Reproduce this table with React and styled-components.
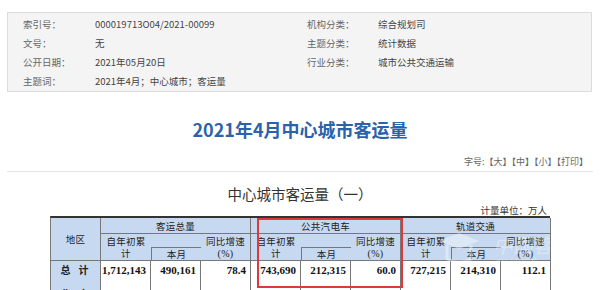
import React from "react";
import styled, { createGlobalStyle } from "styled-components";

const GlobalStyle = createGlobalStyle`
  html, body {
    margin: 0;
    padding: 0;
    background: #fff;
  }
  body {
    width: 600px;
    height: 290px;
    overflow: hidden;
    font-family: "Noto Sans CJK SC", "Noto Sans", sans-serif;
  }
`;

const InfoBox = styled.div`
  box-sizing: border-box;
  margin: 12px 8px 0 7px;
  height: 80px;
  padding: 1px 0 1px 15px;
  background: #f4f4f4;
  border: 1px solid #dcdcdc;
  display: grid;
  grid-template-columns: 72px 212px 71px 1fr;
  grid-auto-rows: 19px;
  font-size: 9.5px;
  color: #555;
`;

const InfoCell = styled.div`
  display: flex;
  align-items: center;
  white-space: nowrap;
  color: ${(p) => (p.$label ? "#666" : "#444")};
`;

const Title = styled.h1`
  margin: 25px 0 0;
  text-align: center;
  font-size: 18px;
  line-height: 24px;
  font-weight: 700;
  color: #2c62a9;
`;

const Toolbar = styled.div`
  margin: 14px 7px 0;
  padding: 0 5px 2px 0;
  line-height: 14px;
  border-bottom: 1px solid #e6e6e6;
  text-align: right;
  font-size: 9px;
  color: #666;
`;

const SubTitle = styled.h2`
  margin: 13px 0 0;
  text-align: center;
  font-size: 14.5px;
  line-height: 18px;
  font-weight: 400;
  color: #333;
`;

const TableWrap = styled.div`
  position: relative;
  width: 500px;
  margin: 0 auto;
`;

const Unit = styled.div`
  margin-top: 1px;
  padding-right: 3px;
  text-align: right;
  font-size: 9.5px;
  line-height: 12px;
  color: #333;
`;

const Grid = styled.div`
  display: grid;
  grid-template-columns: repeat(10, 50px);
  grid-template-rows: 16px 13px 14px 24px 24px;
  border-top: 2px solid #333;
  border-left: 1px solid #777;
`;

const Cell = styled.div`
  box-sizing: border-box;
  grid-column: ${(p) => p.$col};
  grid-row: ${(p) => p.$row};
  display: flex;
  align-items: ${(p) => (p.$top ? "flex-start" : "center")};
  justify-content: ${(p) => (p.$right ? "flex-end" : "center")};
  text-align: center;
  padding: ${(p) => (p.$top ? "2px 4px 0 2px" : "0 2px")};
  background: ${(p) => (p.$head ? "#c6d9f1" : "#fff")};
  border-right: ${(p) => (p.$br ? "1px solid #777" : "none")};
  border-bottom: ${(p) => (p.$bb ? "1px solid #777" : "none")};
  border-left: ${(p) => (p.$bl ? "1px solid #777" : "none")};
  border-top: ${(p) => (p.$bt ? "1px solid #777" : "none")};
  font-size: 9.5px;
  line-height: 12px;
  letter-spacing: 0.3px;
  color: #222;
`;

const Num = styled.span`
  font-family: "Liberation Serif", "Times New Roman", serif;
  font-weight: 700;
  font-size: 11px;
  line-height: 14px;
  letter-spacing: 0;
  color: #111;
`;

const Area = styled.span`
  font-weight: 700;
  font-size: 10px;
  line-height: 14px;
  letter-spacing: 8px;
  margin-right: -8px;
  color: #222;
`;

const Pct = styled.span`
  font-family: "Liberation Serif", "Times New Roman", serif;
  font-size: 10px;
`;

const Highlight = styled.div`
  position: absolute;
  left: 207px;
  top: 14px;
  width: 146px;
  height: 70px;
  box-sizing: border-box;
  border: 2px solid #e0393d;
  pointer-events: none;
`;

const Watermark = styled.svg`
  position: absolute;
  left: 385px;
  top: 25px;
  width: 115px;
  height: 40px;
  pointer-events: none;
`;

const info = [
  ["索引号：", "000019713O04/2021-00099", "机构分类：", "综合规划司"],
  ["文号：", "无", "主题分类：", "统计数据"],
  ["公开日期：", "2021年05月20日", "行业分类：", "城市公共交通运输"],
  ["主题词：", "2021年4月；中心城市；客运量", "", ""],
];

const groups = ["客运总量", "公共汽电车", "轨道交通"];

const rows = [
  ["总计", "1,712,143", "490,161", "78.4", "743,690", "212,315", "60.0", "727,215", "214,310", "112.1"],
  ["北京", "218,466", "63,912", "109.5", "77,104", "22,417", "76.3", "141,362", "41,495", "133.4"],
];

function GroupHeader({ name, start }) {
  return (
    <>
      <Cell $head $br $bb $col={`${start} / span 3`} $row="1">{name}</Cell>
      <Cell $head $bb $col={`${start}`} $row="2 / span 2">自年初累计</Cell>
      <Cell $head $col={`${start + 1}`} $row="2" />
      <Cell $head $bl $bt $bb $col={`${start + 1}`} $row="3">本月</Cell>
      <Cell $head $br $bb $col={`${start + 2}`} $row="2 / span 2">
        <span>同比增速<br /><Pct>(%)</Pct></span>
      </Cell>
    </>
  );
}

export default function App() {
  return (
    <>
      <GlobalStyle />
      <InfoBox>
        {info.map((r, i) => (
          <React.Fragment key={i}>
            <InfoCell $label>{r[0]}</InfoCell>
            <InfoCell>{r[1]}</InfoCell>
            <InfoCell $label>{r[2]}</InfoCell>
            <InfoCell>{r[3]}</InfoCell>
          </React.Fragment>
        ))}
      </InfoBox>

      <Title>2021年4月中心城市客运量</Title>
      <Toolbar>字号:【大】【中】【小】【打印】</Toolbar>
      <SubTitle>中心城市客运量（一）</SubTitle>

      <TableWrap>
        <Unit>计量单位：万人</Unit>
        <Grid>
          <Cell $head $br $bb $col="1" $row="1 / span 3">地区</Cell>
          {groups.map((g, i) => (
            <GroupHeader key={g} name={g} start={2 + i * 3} />
          ))}
          {rows.map((r, ri) =>
            r.map((v, ci) =>
              ci === 0 ? (
                <Cell key={`${ri}-${ci}`} $head $top $br $col="1" $row={`${4 + ri}`}>
                  <Area>{v}</Area>
                </Cell>
              ) : (
                <Cell key={`${ri}-${ci}`} $top $right $br $col={`${ci + 1}`} $row={`${4 + ri}`}>
                  <Num>{v}</Num>
                </Cell>
              )
            )
          )}
        </Grid>
        <Highlight />
        <Watermark viewBox="0 0 115 40">
          <path d="M4 12 L24 4 L44 12 L24 20 Z" fill="#fff" fillOpacity="0.4" />
          <path d="M12 16 L12 30 Q24 36 36 30 L36 16" fill="none" stroke="#fff" strokeOpacity="0.4" strokeWidth="3" />
          <text x="58" y="24" fontSize="20" fontStyle="italic" fill="#fff" fillOpacity="0.35" fontFamily="Noto Sans CJK SC, sans-serif">中国客</text>
          <text x="58" y="34" fontSize="5" fill="#fff" fillOpacity="0.35" fontFamily="Noto Sans, sans-serif">CHINA PASSENGER</text>
        </Watermark>
      </TableWrap>
    </>
  );
}
